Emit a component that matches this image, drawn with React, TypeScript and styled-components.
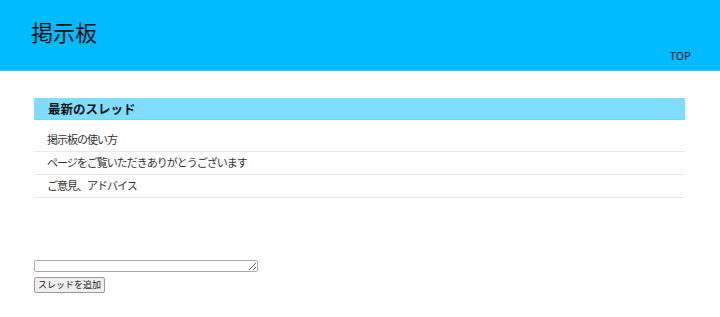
import styled, { createGlobalStyle } from 'styled-components';

const threads = [
  '掲示板の使い方',
  'ページをご覧いただきありがとうございます',
  'ご意見、アドバイス',
];

const GlobalStyle = createGlobalStyle`
  body {
    margin: 0;
    background: #fff;
    font-family: 'Noto Sans CJK JP', 'Noto Sans', sans-serif;
    color: #222;
  }
`;

const App = () => {
  return (
    <>
      <GlobalStyle />
      <Header>
        <Title>掲示板</Title>
        <Nav>TOP</Nav>
      </Header>
      <Main>
        <SectionHeading>最新のスレッド</SectionHeading>
        <ThreadList>
          {threads.map((t, index) => (
            <ThreadRow key={index}>{t}</ThreadRow>
          ))}
        </ThreadList>
        <Form>
          <TextArea />
          <AddButton>スレッドを追加</AddButton>
        </Form>
      </Main>
    </>
  );
};

export default App;

const Header = styled.header`
  height: 70px;
  display: flex;
  flex-direction: column;
  background-color: #00bbff;
  border-bottom: 1px solid #33c8ff;
`;

const Title = styled.h1`
  margin: 0;
  padding: 17px 31px 0;
  font-size: 22px;
  font-weight: 400;
  line-height: 28px;
  color: #111;
`;

const Nav = styled.div`
  align-self: flex-end;
  margin-top: auto;
  padding: 0 29px 8px 0;
  font-size: 11px;
  line-height: 14px;
  color: #111;
`;

const Main = styled.main`
  margin: 27px 35px 0 34px;
`;

const SectionHeading = styled.h2`
  margin: 0;
  height: 22px;
  padding-left: 14px;
  background-color: #80ddff;
  border-bottom: 1px solid #72d6fb;
  box-sizing: border-box;
  font-size: 12.5px;
  font-weight: 700;
  line-height: 22px;
  color: #111;
`;

const ThreadList = styled.ul`
  list-style: none;
  margin: 9px 0 0;
  padding: 0;
`;

const ThreadRow = styled.li`
  height: 23px;
  box-sizing: border-box;
  padding-left: 13px;
  border-bottom: 1px solid #e8e8e8;
  font-size: 11px;
  letter-spacing: -1px;
  line-height: 21px;
  color: #333;
`;

const Form = styled.div`
  display: flex;
  flex-direction: column;
  align-items: flex-start;
  gap: 5px;
  margin-top: 62px;
`;

const TextArea = styled.textarea`
  width: 224px;
  height: 12px;
  box-sizing: border-box;
  margin: 0;
  padding: 0;
  border: 1px solid #a9a9a9;
  border-radius: 2px;
  font-size: 10px;
`;

const AddButton = styled.button`
  height: 16px;
  margin: 0;
  padding: 0 3px;
  box-sizing: border-box;
  border: 1px solid #9a9a9a;
  border-radius: 2px;
  background-color: #efefef;
  font-family: 'Noto Sans CJK JP', sans-serif;
  font-size: 9px;
  line-height: 14px;
  color: #222;
`;
